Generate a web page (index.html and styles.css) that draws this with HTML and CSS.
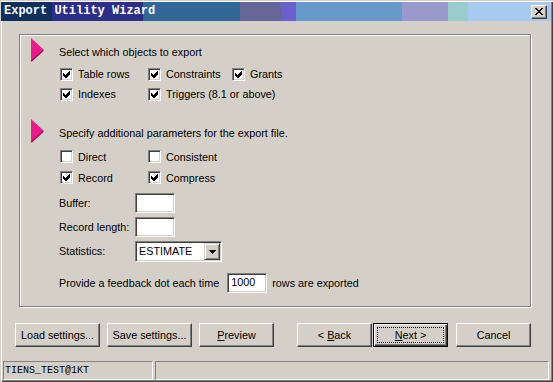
FILE: index.html
```html
<!DOCTYPE html>
<html>
<head>
    <meta http-equiv="Content-Type" content="text/html; charset=UTF-8">
    <title>Export Utility Wizard</title>
    <link rel="stylesheet" href="styles.css">
</head>
<body>
<div class="window">
    <div class="titlebar">
        <span class="title">Export Utility Wizard</span>
        <span class="close">
            <svg width="8" height="7" viewBox="0 0 8 7" shape-rendering="crispEdges"><path d="M0 0h2v1H0z M6 0h2v1H6z M1 1h2v1H1z M5 1h2v1H5z M2 2h4v1H2z M3 3h2v1H3z M2 4h4v1H2z M1 5h2v1H1z M5 5h2v1H5z M0 6h2v1H0z M6 6h2v1H6z" fill="#000"/></svg>
        </span>
    </div>
    <div class="client">
        <div class="panel">
            <!-- objects -->
            <div class="section">
                <svg class="arrow" viewBox="0 0 13 24"><polygon points="0,0 13,12 0,24" fill="#ee1a8c"/><line x1="0.5" y1="23" x2="12" y2="12.5" stroke="#9a0c55" stroke-width="1.4"/></svg>
                <div class="section-body">
                    <div class="heading">Select which objects to export</div>
                    <div class="checks three">
                        <label class="check"><span class="box"><svg viewBox="1 1 11 11" shape-rendering="crispEdges"><polygon points="3,5 5,7 9,3 10,3 10,6 6,10 5,10 3,8"/></svg></span>Table rows</label>
                        <label class="check"><span class="box"><svg viewBox="1 1 11 11" shape-rendering="crispEdges"><polygon points="3,5 5,7 9,3 10,3 10,6 6,10 5,10 3,8"/></svg></span>Constraints</label>
                        <label class="check"><span class="box"><svg viewBox="1 1 11 11" shape-rendering="crispEdges"><polygon points="3,5 5,7 9,3 10,3 10,6 6,10 5,10 3,8"/></svg></span>Grants</label>
                        <label class="check"><span class="box"><svg viewBox="1 1 11 11" shape-rendering="crispEdges"><polygon points="3,5 5,7 9,3 10,3 10,6 6,10 5,10 3,8"/></svg></span>Indexes</label>
                        <label class="check span2"><span class="box"><svg viewBox="1 1 11 11" shape-rendering="crispEdges"><polygon points="3,5 5,7 9,3 10,3 10,6 6,10 5,10 3,8"/></svg></span>Triggers (8.1 or above)</label>
                    </div>
                </div>
            </div>
            <!-- parameters -->
            <div class="section second">
                <svg class="arrow" viewBox="0 0 13 24"><polygon points="0,0 13,12 0,24" fill="#ee1a8c"/><line x1="0.5" y1="23" x2="12" y2="12.5" stroke="#9a0c55" stroke-width="1.4"/></svg>
                <div class="section-body">
                    <div class="heading">Specify additional parameters for the export file.</div>
                    <div class="checks two">
                        <label class="check"><span class="box"></span>Direct</label>
                        <label class="check"><span class="box"></span>Consistent</label>
                        <label class="check"><span class="box"><svg viewBox="1 1 11 11" shape-rendering="crispEdges"><polygon points="3,5 5,7 9,3 10,3 10,6 6,10 5,10 3,8"/></svg></span>Record</label>
                        <label class="check"><span class="box"><svg viewBox="1 1 11 11" shape-rendering="crispEdges"><polygon points="3,5 5,7 9,3 10,3 10,6 6,10 5,10 3,8"/></svg></span>Compress</label>
                    </div>
                    <div class="fields">
                        <span class="label">Buffer:</span><span class="field"></span>
                        <span class="label">Record length:</span><span class="field"></span>
                        <span class="label">Statistics:</span>
                        <span class="select"><span class="value">ESTIMATE</span><span class="drop"><svg width="7" height="4" viewBox="0 0 7 4" shape-rendering="crispEdges"><path d="M0 0h7v1H0z M1 1h5v1H1z M2 2h3v1H2z M3 3h1v1H3z" fill="#000"/></svg></span></span>
                    </div>
                    <div class="feedback">
                        <span class="prompt">Provide a feedback dot each time</span>
                        <span class="field">1000</span>
                        <span>rows are exported</span>
                    </div>
                </div>
            </div>
        </div>
        <div class="buttons">
            <span class="btn"><span>Load settings...</span></span>
            <span class="btn"><span>Save settings...</span></span>
            <span class="btn short"><span><u>P</u>review</span></span>
            <span class="spacer"></span>
            <span class="btn short"><span>&lt; <u>B</u>ack</span></span>
            <span class="btn short default"><span class="focus"><span><u>N</u>ext &gt;</span></span></span>
            <span class="btn short"><span>Cancel</span></span>
        </div>
    </div>
    <div class="statusbar">
        <span class="status first">TIENS_TEST@1KT</span>
        <span class="status rest"></span>
    </div>
</div>
</body>
</html>
```

FILE: styles.css
```css
body{margin:0; font-family:"Liberation Sans", Arial, sans-serif; font-size:10.8px; color:#000; background:#d4d0c8;}
.window{
    width:553px; height:382px; box-sizing:border-box; display:flex; flex-direction:column; overflow:hidden;
    background:#d4d0c8;
    box-shadow:inset 1px 1px 0 #d4d0c8, inset 2px 2px 0 #fff, inset -1px -1px 0 #404040, inset -2px -2px 0 #808080;}

/* title bar */
.titlebar{
    height:19px; margin:2px 2px 0 1px; padding:0 4px 0 3px; display:flex; align-items:center; justify-content:space-between;
    background:linear-gradient(to right,
        #0f305c 0 51px, #2c2e8a 51px 142px, #32679a 142px 239px, #666699 239px 280px,
        #6a5fcc 280px 295px, #6699cc 295px 401px, #9999cc 401px 447px, #99cccc 447px 467px, #a6caf0 467px);}
.title{font-family:"Liberation Mono", monospace; font-weight:bold; font-size:12px; color:#fff; line-height:19px;}
.close{
    width:16px; height:14px; box-sizing:border-box; display:flex; align-items:center; justify-content:center; background:#d4d0c8;
    border:1px solid; border-color:#fff #404040 #404040 #fff; box-shadow:inset -1px -1px 0 #808080;}

/* main area */
.client{flex:1; display:flex; flex-direction:column;}
.panel{
    height:273px; box-sizing:border-box; margin:13px 22px 0 19px; padding:3px 0 0 11px;
    border:1px solid #808080; box-shadow:1px 1px 0 #fff, inset 1px 1px 0 #fff;}
.section{display:flex;}
.section.second{margin-top:15px;}
.arrow{width:13px; height:24px; flex:none; margin-right:15px;}
.heading{margin-top:7px; line-height:14px;}
.checks{display:grid; margin:5px 0 0 1px; grid-auto-rows:20px;}
.checks.three{grid-template-columns:88px 84px auto;}
.checks.two{grid-template-columns:88px auto; grid-auto-rows:21px; margin-top:6px;}
.span2{grid-column:span 2;}
.check{display:flex; align-items:center; gap:5px; white-space:nowrap;}
.box{
    width:13px; height:13px; box-sizing:border-box; display:inline-flex; background:#fff;
    border:1px solid; border-color:#808080 #fff #fff #808080;
    box-shadow:inset 1px 1px 0 #404040, inset -1px -1px 0 #d4d0c8;}
.box svg{width:11px; height:11px;}

/* text fields */
.fields{display:grid; grid-template-columns:76px auto; grid-auto-rows:24px; margin-top:5px; align-items:start;}
.label{line-height:20px;}
.field{
    width:40px; height:20px; box-sizing:border-box; padding-left:3px; line-height:16px; background:#fff;
    border:1px solid; border-color:#808080 #fff #fff #808080;
    box-shadow:inset 1px 1px 0 #404040, inset -1px -1px 0 #d4d0c8;}
.select{
    width:87px; height:21px; box-sizing:border-box; display:flex; justify-content:space-between; background:#fff; padding:1px;
    border:1px solid; border-color:#808080 #fff #fff #808080;
    box-shadow:inset 1px 1px 0 #404040, inset -1px -1px 0 #d4d0c8;}
.select .value{padding-left:2px; line-height:17px;}
.drop{
    width:16px; height:17px; box-sizing:border-box; display:flex; align-items:center; justify-content:center; background:#d4d0c8;
    border:1px solid; border-color:#d4d0c8 #404040 #404040 #d4d0c8;
    box-shadow:inset 1px 1px 0 #fff, inset -1px -1px 0 #808080;}
.feedback{display:flex; align-items:center; gap:5px; margin-top:8px;}
.feedback .prompt{margin-right:3px;}

/* buttons */
.buttons{display:flex; height:24px; margin-top:16px; padding:0 22px 0 15px;}
.btn{
    width:85px; height:24px; box-sizing:border-box; display:flex; align-items:center; justify-content:center; margin-left:7px;
    border:1px solid; border-color:#fff #404040 #404040 #fff; box-shadow:inset -1px -1px 0 #808080; white-space:nowrap;}
.btn:first-child{margin-left:0;}
.btn.short{width:75px;}
.spacer{flex:1;}
.spacer + .btn{margin-left:0;}
.btn.default{
    margin-left:1px; padding:3px; align-items:stretch; border:1px solid #000;
    box-shadow:inset 1px 1px 0 #fff, inset -1px -1px 0 #404040, inset -2px -2px 0 #808080;}
.focus{flex:1; display:flex; align-items:center; justify-content:center; border:1px dotted #000;}
.btn.default + .btn{margin-left:8px;}

/* status bar */
.statusbar{display:flex; gap:2px; height:19px; margin:auto 0 2px 0; padding:0 4px 0 3px;}
.status{
    box-sizing:border-box; height:19px; padding-left:1px; line-height:17px;
    font-family:"Liberation Mono", monospace; font-size:10px;
    border:1px solid; border-color:#808080 #fff #fff #808080;}
.status.first{width:150px;}
.status.rest{flex:1;}
```
